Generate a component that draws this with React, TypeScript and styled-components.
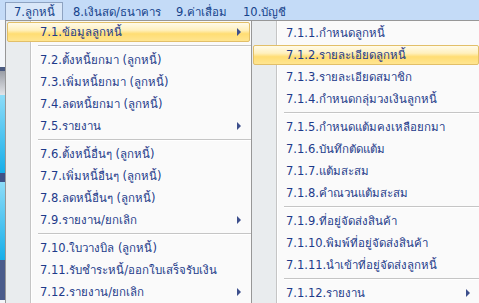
import styled, { createGlobalStyle } from 'styled-components';

const GlobalStyle = createGlobalStyle`
  html, body {
    margin: 0;
    padding: 0;
    background: #f2f5f9;
  }
  body {
    font-family: "DejaVu Sans", "Noto Sans", sans-serif;
    font-size: 11.5px;
  }
`;

const Screen = styled.div`
  width: 479px;
  height: 303px;
  overflow: hidden;
  display: flex;
  flex-direction: column;
`;

const MenuBar = styled.div`
  height: 20px;
  flex: none;
  display: flex;
  align-items: flex-end;
  padding-left: 5px;
  background: #c4dbf7;
`;

const BarItem = styled.div<{ open?: boolean; w: number }>`
  width: ${p => p.w}px;
  height: 18px;
  flex: none;
  box-sizing: border-box;
  display: flex;
  align-items: center;
  padding-left: ${p => (p.open ? 8 : 9)}px;
  color: #15428b;
  white-space: nowrap;
  border: 1px solid ${p => (p.open ? '#8ea3c1' : 'transparent')};
  border-bottom: none;
  background: ${p => (p.open ? '#d9e7f8' : 'transparent')};
`;

const Body = styled.div`
  flex: 1;
  display: flex;
  min-height: 0;
`;

const BackStrip = styled.div`
  width: 5px;
  flex: none;
  display: flex;
  flex-direction: column;
`;

const StripPart = styled.div<{ h: number; bg: string }>`
  height: ${p => p.h}px;
  flex: none;
  background: ${p => p.bg};
`;

const Menu = styled.div<{ w: number; top: number }>`
  width: ${p => p.w}px;
  flex: none;
  box-sizing: border-box;
  display: flex;
  flex-direction: column;
  border: 1px solid #979797;
  border-bottom: none;
  padding-top: ${p => p.top}px;
  background: linear-gradient(
    to right,
    #e9ecee 0 24px,
    #c5c5c5 24px 25px,
    #ffffff 25px 26px,
    #fafafa 26px
  );
`;

const MainMenu = styled(Menu)`
  border-right: none;
`;

const Item = styled.div<{ active?: boolean }>`
  flex: none;
  height: 20px;
  margin: 1px;
  box-sizing: border-box;
  display: flex;
  align-items: center;
  padding-left: 32px;
  padding-right: 8px;
  color: #1e3a8a;
  white-space: nowrap;
  border: 1px solid ${p => (p.active ? '#e2bf68' : 'transparent')};
  border-radius: 2px;
  background: ${p =>
    p.active
      ? 'linear-gradient(to bottom, #fffbea 0%, #fff0bd 40%, #ffdd73 60%, #ffe590 100%)'
      : 'transparent'};
`;

const Arrow = styled.span`
  margin-left: auto;
  width: 0;
  height: 0;
  border-left: 4px solid #3d4f8c;
  border-top: 4px solid transparent;
  border-bottom: 4px solid transparent;
`;

const Separator = styled.div`
  flex: none;
  height: 1px;
  margin: 2px 0 2px 32px;
  background: #c5c5c5;
  border-bottom: 1px solid #ffffff;
`;

type Entry = { label: string; sub?: boolean; active?: boolean } | 'sep';

const mainItems: Entry[] = [
  { label: '7.1.ข้อมูลลูกหนี้', sub: true, active: true },
  'sep',
  { label: '7.2.ตั้งหนี้ยกมา (ลูกหนี้)' },
  { label: '7.3.เพิ่มหนี้ยกมา (ลูกหนี้)' },
  { label: '7.4.ลดหนี้ยกมา (ลูกหนี้)' },
  { label: '7.5.รายงาน', sub: true },
  'sep',
  { label: '7.6.ตั้งหนี้อื่นๆ (ลูกหนี้)' },
  { label: '7.7.เพิ่มหนี้อื่นๆ (ลูกหนี้)' },
  { label: '7.8.ลดหนี้อื่นๆ (ลูกหนี้)' },
  { label: '7.9.รายงาน/ยกเลิก', sub: true },
  'sep',
  { label: '7.10.ใบวางบิล (ลูกหนี้)' },
  { label: '7.11.รับชำระหนี้/ออกใบเสร็จรับเงิน' },
  { label: '7.12.รายงาน/ยกเลิก', sub: true },
];

const subItems: Entry[] = [
  { label: '7.1.1.กำหนดลูกหนี้' },
  { label: '7.1.2.รายละเอียดลูกหนี้', active: true },
  { label: '7.1.3.รายละเอียดสมาชิก' },
  { label: '7.1.4.กำหนดกลุ่มวงเงินลูกหนี้' },
  'sep',
  { label: '7.1.5.กำหนดแต้มคงเหลือยกมา' },
  { label: '7.1.6.บันทึกตัดแต้ม' },
  { label: '7.1.7.แต้มสะสม' },
  { label: '7.1.8.คำณวนแต้มสะสม' },
  'sep',
  { label: '7.1.9.ที่อยู่จัดส่งสินค้า' },
  { label: '7.1.10.พิมพ์ที่อยู่จัดส่งสินค้า' },
  { label: '7.1.11.นำเข้าที่อยู่จัดส่งลูกหนี้' },
  'sep',
  { label: '7.1.12.รายงาน', sub: true },
];

const barItems = [
  { label: '7.ลูกหนี้', w: 58, open: true },
  { label: '8.เงินสด/ธนาคาร', w: 103 },
  { label: '9.ค่าเสื่อม', w: 67 },
  { label: '10.บัญชี', w: 60 },
];

const strip = [
  { h: 47, bg: '#f3f6fa' },
  { h: 4, bg: '#4a5a80' },
  { h: 24, bg: 'linear-gradient(#9a9ea6, #e2e4e8)' },
  { h: 78, bg: 'linear-gradient(#8ddcf8, #16aee9)' },
  { h: 9, bg: '#3f5287' },
  { h: 78, bg: 'linear-gradient(#8ddcf8, #16aee9)' },
  { h: 40, bg: '#4b5c8b' },
];

function renderEntries(entries: Entry[]) {
  return entries.map((e, i) =>
    e === 'sep' ? (
      <Separator key={i} />
    ) : (
      <Item key={i} active={e.active}>
        {e.label}
        {e.sub && <Arrow />}
      </Item>
    )
  );
}

export default function App() {
  return (
    <>
      <GlobalStyle />
      <Screen>
        <MenuBar>
          {barItems.map(b => (
            <BarItem key={b.label} w={b.w} open={b.open}>
              {b.label}
            </BarItem>
          ))}
        </MenuBar>
        <Body>
          <BackStrip>
            {strip.map((s, i) => (
              <StripPart key={i} h={s.h} bg={s.bg} />
            ))}
          </BackStrip>
          <MainMenu w={246} top={0}>
            {renderEntries(mainItems)}
          </MainMenu>
          <Menu w={230} top={1}>
            {renderEntries(subItems)}
          </Menu>
        </Body>
      </Screen>
    </>
  );
}
